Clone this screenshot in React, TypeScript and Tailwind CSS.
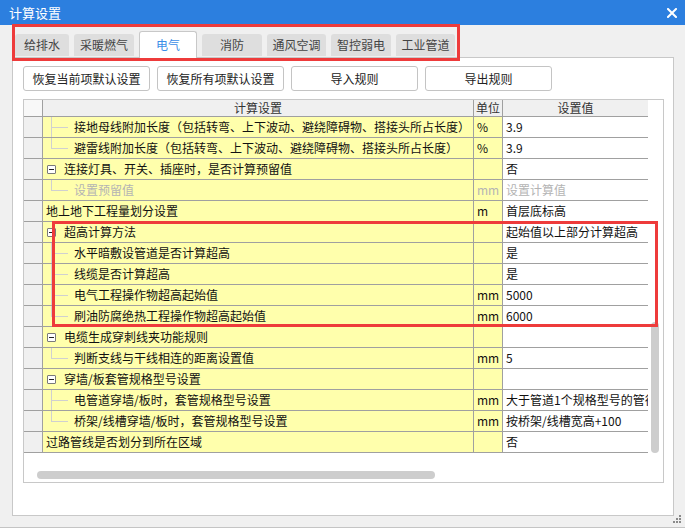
type Row = {
  kind: "child" | "parent" | "leaf";
  name: string;
  unit?: string;
  value?: string;
  last?: boolean;
  disabled?: boolean;
};

const tabs = [
  { label: "给排水", w: "w-[54px]" },
  { label: "采暖燃气", w: "w-[60px]" },
  { label: "电气", w: "w-[58px]", active: true },
  { label: "消防", w: "w-[60px]" },
  { label: "通风空调", w: "w-[59px]" },
  { label: "智控弱电", w: "w-[60px]" },
  { label: "工业管道", w: "w-[59px]" },
];

const buttons = ["恢复当前项默认设置", "恢复所有项默认设置", "导入规则", "导出规则"];

const rows: Row[] = [
  { kind: "child", name: "接地母线附加长度（包括转弯、上下波动、避绕障碍物、搭接头所占长度）", unit: "%", value: "3.9" },
  { kind: "child", name: "避雷线附加长度（包括转弯、上下波动、避绕障碍物、搭接头所占长度）", unit: "%", value: "3.9", last: true },
  { kind: "parent", name: "连接灯具、开关、插座时，是否计算预留值", value: "否" },
  { kind: "child", name: "设置预留值", unit: "mm", value: "设置计算值", last: true, disabled: true },
  { kind: "leaf", name: "地上地下工程量划分设置", unit: "m", value: "首层底标高" },
  { kind: "parent", name: "超高计算方法", value: "起始值以上部分计算超高" },
  { kind: "child", name: "水平暗敷设管道是否计算超高", value: "是" },
  { kind: "child", name: "线缆是否计算超高", value: "是" },
  { kind: "child", name: "电气工程操作物超高起始值", unit: "mm", value: "5000" },
  { kind: "child", name: "刷油防腐绝热工程操作物超高起始值", unit: "mm", value: "6000", last: true },
  { kind: "parent", name: "电缆生成穿刺线夹功能规则" },
  { kind: "child", name: "判断支线与干线相连的距离设置值", unit: "mm", value: "5", last: true },
  { kind: "parent", name: "穿墙/板套管规格型号设置" },
  { kind: "child", name: "电管道穿墙/板时，套管规格型号设置", unit: "mm", value: "大于管道1个规格型号的管径" },
  { kind: "child", name: "桥架/线槽穿墙/板时，套管规格型号设置", unit: "mm", value: "按桥架/线槽宽高+100", last: true },
  { kind: "leaf", name: "过路管线是否划分到所在区域", value: "否" },
];

function MinusBox() {
  return (
    <span className="absolute left-[4px] top-[6px] flex h-[9px] w-[9px] items-center justify-center rounded-[1px] border border-[#7a7a7a] bg-white">
      <span className="h-px w-[5px] bg-[#222]" />
    </span>
  );
}

function NameCell({ row }: { row: Row }) {
  const color = row.disabled ? "text-[#b4b4b4]" : "text-[#111]";
  return (
    <div className="relative h-full w-[431px] shrink-0 overflow-hidden whitespace-nowrap border-r border-[#a0a0a0] bg-[#ffffac]">
      {row.kind === "child" && (
        <>
          <span className={`absolute left-[8px] top-0 w-px bg-[#d0d0d0] ${row.last ? "h-[10px]" : "h-full"}`} />
          <span className="absolute left-[8px] top-[10px] h-px w-[17px] bg-[#d0d0d0]" />
        </>
      )}
      {row.kind === "parent" && <MinusBox />}
      <span
        className={`absolute top-0 leading-[20px] ${color} ${
          row.kind === "child" ? "left-[31px]" : row.kind === "parent" ? "left-[21px]" : "left-[3px]"
        }`}
      >
        {row.name}
      </span>
    </div>
  );
}

function TableRow({ row }: { row: Row }) {
  const color = row.disabled ? "text-[#b4b4b4]" : "text-[#111]";
  return (
    <div className="flex h-[21px] shrink-0 border-b border-[#a0a0a0]">
      <div className="h-full w-[19px] shrink-0 border-r border-[#a0a0a0] bg-[#f0f0f0]" />
      <NameCell row={row} />
      <div className={`h-full w-[29px] shrink-0 border-r border-[#a0a0a0] bg-[#ffffac] pl-[3px] leading-[20px] ${color}`}>
        {row.unit}
      </div>
      <div className={`h-full w-[145px] shrink-0 overflow-hidden whitespace-nowrap bg-white pl-[3px] leading-[20px] ${color}`}>
        {row.value}
      </div>
    </div>
  );
}

export default function App() {
  return (
    <div className="relative h-[528px] w-[685px] overflow-hidden border-b border-[#c4c4c4] bg-[#f0f0f0] font-['Noto_Sans_CJK_SC','Microsoft_YaHei',sans-serif] text-[12px]">
      {/* title bar */}
      <div className="flex h-[25px] items-center justify-between bg-[#2c7fdf] pl-[9px] pr-[8px] text-white">
        <span className="text-[13px]">计算设置</span>
        <svg width="10" height="10" viewBox="0 0 10 10">
          <path d="M1 1 L9 9 M9 1 L1 9" stroke="white" strokeWidth="2" strokeLinecap="square" />
        </svg>
      </div>

      {/* tabs */}
      <div className="flex h-[32px] items-end gap-[5px] pl-[15px]">
        {tabs.map((t) =>
          t.active ? (
            <div
              key={t.label}
              className={`relative z-10 -mb-px flex h-[27px] items-center justify-center rounded-t-[3px] border border-b-0 border-[#c8c8c8] bg-white text-[#3a8ee8] ${t.w}`}
            >
              {t.label}
            </div>
          ) : (
            <div
              key={t.label}
              className={`mb-px flex h-[22px] items-center justify-center rounded-t-[3px] bg-[#dedede] text-[#444] ${t.w}`}
            >
              {t.label}
            </div>
          )
        )}
      </div>

      {/* panel */}
      <div className="ml-[12px] h-[459px] w-[662px] border border-[#c8c8c8] bg-white pl-[10px] pt-[8px]">
        <div className="flex gap-[7px]">
          {buttons.map((b) => (
            <div
              key={b}
              className="flex h-[25px] w-[127px] items-center justify-center rounded-[3px] border border-[#c4c4c4] bg-white text-[#222]"
            >
              {b}
            </div>
          ))}
        </div>

        <div className="mt-[8px] flex h-[384px] w-[641px] border border-[#c8c8c8] bg-white">
          <div className="flex w-[624px] shrink-0 flex-col">
            <div className="flex h-[17px] shrink-0 border-b border-[#a0a0a0] leading-[16px] text-[#333]">
              <div className="h-full w-[19px] shrink-0 border-r border-[#a0a0a0] bg-[#f8f8f8]" />
              <div className="h-full w-[431px] shrink-0 border-r border-[#a0a0a0] bg-[#f0f0f0] text-center">计算设置</div>
              <div className="h-full w-[29px] shrink-0 border-r border-[#a0a0a0] bg-[#f0f0f0] text-center">单位</div>
              <div className="h-full w-[145px] shrink-0 bg-[#f0f0f0] text-center">设置值</div>
            </div>
            {rows.map((r, i) => (
              <TableRow key={i} row={r} />
            ))}
            <div className="flex-1 pl-[13px] pt-[18px]">
              <div className="h-[8px] w-[398px] rounded-full bg-[#cdcdcd]" />
            </div>
          </div>
          <div className="w-[15px] shrink-0 pl-[3px] pt-[222px]">
            <div className="h-[131px] w-[8px] rounded-full bg-[#cdcdcd]" />
          </div>
        </div>
      </div>

      {/* resize grip */}
      <svg className="absolute bottom-[3px] right-[3px]" width="10" height="10" viewBox="0 0 10 10">
        <rect x="7" y="1" width="2" height="2" fill="#8a8a8a" />
        <rect x="4" y="4" width="2" height="2" fill="#8a8a8a" />
        <rect x="7" y="4" width="2" height="2" fill="#8a8a8a" />
        <rect x="1" y="7" width="2" height="2" fill="#8a8a8a" />
        <rect x="4" y="7" width="2" height="2" fill="#8a8a8a" />
        <rect x="7" y="7" width="2" height="2" fill="#8a8a8a" />
      </svg>

      {/* red annotation boxes */}
      <div className="pointer-events-none absolute left-[12px] top-[24px] h-[37px] w-[448px] border-[3px] border-[#ee3b3b]" />
      <div className="pointer-events-none absolute left-[52px] top-[221px] h-[106px] w-[606px] border-[3px] border-[#ee3b3b]" />
    </div>
  );
}
